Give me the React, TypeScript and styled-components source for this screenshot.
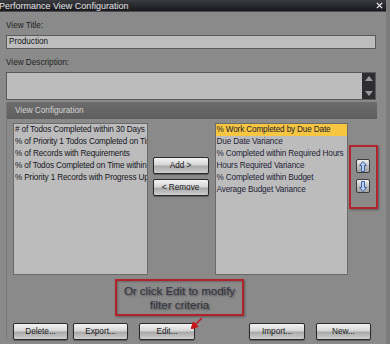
import styled, { createGlobalStyle } from 'styled-components';

const GlobalStyle = createGlobalStyle`
  html, body {
    margin: 0;
    padding: 0;
    background: #8a8a8a;
  }
  * {
    box-sizing: border-box;
  }
`;

const SANS = `"Liberation Sans", Arial, sans-serif`;

const available = [
  '# of Todos Completed within 30 Days',
  '% of Priority 1 Todos Completed on Time',
  '% of Records with Requirements',
  '% of Todos Completed on Time within Budget',
  '% Priority 1 Records with Progress Updates',
];

const selected = [
  '% Work Completed by Due Date',
  'Due Date Variance',
  '% Completed within Required Hours',
  'Hours Required Variance',
  '% Completed within Budget',
  'Average Budget Variance',
];

const App = () => {
  return (
    <Window>
      <GlobalStyle />
      <TitleBar>
        <TitleText>Performance View Configuration</TitleText>
        <CloseIcon viewBox="0 0 8 8">
          <path d="M1 1 L7 7 M7 1 L1 7" stroke="#e8e8e8" strokeWidth="1.6" />
        </CloseIcon>
      </TitleBar>
      <Form>
        <Label>View Title:</Label>
        <Input>Production</Input>
        <Label>View Description:</Label>
        <TextArea>
          <ScrollBar>
            <svg width="8" height="5" viewBox="0 0 8 5">
              <path d="M0 5 L4 0 L8 5 Z" fill="#9a9a9a" />
            </svg>
            <svg width="8" height="5" viewBox="0 0 8 5">
              <path d="M0 0 L4 5 L8 0 Z" fill="#9a9a9a" />
            </svg>
          </ScrollBar>
        </TextArea>
        <Panel>
          <PanelHeader>View Configuration</PanelHeader>
          <PanelBody>
            <ListsRow>
              <List>
                {available.map((t) => (
                  <ListItem key={t}>{t}</ListItem>
                ))}
              </List>
              <MoveColumn>
                <Button $w={56}>Add &gt;</Button>
                <Button $w={56}>&lt; Remove</Button>
              </MoveColumn>
              <List $right>
                {selected.map((t, i) => (
                  <ListItem key={t} $active={i === 0} $blue>
                    {t}
                  </ListItem>
                ))}
              </List>
              <OrderBox>
                <OrderButton>
                  <svg width="8" height="11" viewBox="0 0 8 11">
                    <path
                      d="M4 0.5 L7.5 4.5 L5.5 4.5 L5.5 10.5 L2.5 10.5 L2.5 4.5 L0.5 4.5 Z"
                      fill="#b9cdec"
                      stroke="#3d63a8"
                      strokeWidth="1"
                    />
                  </svg>
                </OrderButton>
                <OrderButton>
                  <svg width="8" height="11" viewBox="0 0 8 11">
                    <path
                      d="M4 10.5 L7.5 6.5 L5.5 6.5 L5.5 0.5 L2.5 0.5 L2.5 6.5 L0.5 6.5 Z"
                      fill="#b9cdec"
                      stroke="#3d63a8"
                      strokeWidth="1"
                    />
                  </svg>
                </OrderButton>
              </OrderBox>
            </ListsRow>
            <ButtonRow>
              <Button $w={55}>Delete...</Button>
              <Button $w={55}>Export...</Button>
              <Button $w={56} $gap={6}>
                Edit...
              </Button>
              <Spacer />
              <Button $w={56}>Import...</Button>
              <Button $w={55} $gap={6}>
                New...
              </Button>
            </ButtonRow>
          </PanelBody>
        </Panel>
      </Form>
      <Callout>
        Or click Edit to modify
        <br />
        filter criteria
      </Callout>
      <CalloutArrow viewBox="0 0 12 12">
        <path
          d="M11 1 L4.5 7.5 L6.5 9.5 L0.5 11.5 L2.5 5.5 L4.5 7.5"
          fill="#c4161c"
          stroke="#c4161c"
          strokeWidth="1.6"
          strokeLinejoin="round"
        />
      </CalloutArrow>
    </Window>
  );
};

export default App;

const Window = styled.div`
  position: relative;
  width: 390px;
  height: 344px;
  overflow: hidden;
  font-family: ${SANS};
  background: repeating-conic-gradient(#8d8d8d 0 25%, #878787 0 50%) 0 0 / 2px 2px;
  border-right: 4px solid #7c7c7c;
`;

const TitleBar = styled.div`
  display: flex;
  align-items: center;
  justify-content: space-between;
  height: 12px;
  padding: 0 3px 0 0;
  background: linear-gradient(#3a3b40, #18191d);
  border-bottom: 1px solid #4c4c50;
`;

const TitleText = styled.span`
  color: #e4e4e4;
  font-size: 9px;
  line-height: 12px;
  margin-left: -1px;
`;

const CloseIcon = styled.svg`
  width: 7px;
  height: 7px;
`;

const Form = styled.div`
  display: flex;
  flex-direction: column;
  padding: 0 10px 0 6px;
`;

const Label = styled.div`
  height: 10px;
  margin-top: 9px;
  font-size: 8.2px;
  line-height: 10px;
  color: #222;
`;

const Input = styled.div`
  height: 14px;
  margin-top: 4px;
  padding: 0 2px;
  width: 370px;
  background: #bdbdbd;
  border: 1px solid #5a5a5a;
  font-size: 8.2px;
  line-height: 12px;
  color: #151515;
`;

const TextArea = styled.div`
  display: flex;
  justify-content: flex-end;
  height: 28px;
  width: 370px;
  margin-top: 4px;
  background: #bcbcbc;
  border: 1px solid #5a5a5a;
`;

const ScrollBar = styled.div`
  display: flex;
  flex-direction: column;
  align-items: center;
  justify-content: space-between;
  width: 13px;
  padding: 3px 0;
  background: #2c2d31;
`;

const Panel = styled.div`
  margin-top: 2px;
  width: 372px;
  display: flex;
  flex-direction: column;
  border-left: 1px solid #777;
`;

const PanelHeader = styled.div`
  height: 17px;
  width: 370px;
  padding-left: 8px;
  background: linear-gradient(#6c6c6c, #5e5e5e);
  color: #d4d4d4;
  font-size: 8.2px;
  line-height: 17px;
`;

const PanelBody = styled.div`
  display: flex;
  flex-direction: column;
  padding: 4px 0 0 6px;
`;

const ListsRow = styled.div`
  display: flex;
  align-items: flex-start;
`;

const List = styled.div<{ $right?: boolean }>`
  width: ${(p) => (p.$right ? 134 : 135)}px;
  height: 152px;
  margin-left: ${(p) => (p.$right ? 6 : 0)}px;
  background: #bcbcbc;
  border: 1px solid #6a6a6a;
  overflow: hidden;
`;

const ListItem = styled.div<{ $active?: boolean; $blue?: boolean }>`
  height: 12px;
  padding-left: 1px;
  white-space: nowrap;
  overflow: hidden;
  font-size: 8.2px;
  letter-spacing: -0.15px;
  line-height: 12px;
  color: ${(p) => (p.$blue ? '#1d2236' : '#15151c')};
  background: ${(p) => (p.$active ? '#f6c640' : 'transparent')};
`;

const MoveColumn = styled.div`
  display: flex;
  flex-direction: column;
  gap: 5px;
  margin: 34px 0 0 5px;
`;

const Button = styled.div<{ $w: number; $gap?: number }>`
  width: ${(p) => p.$w}px;
  height: 17px;
  margin-left: ${(p) => p.$gap ?? 0}px;
  border: 1px solid #2a2a2a;
  border-radius: 2px;
  background: linear-gradient(#f4f4f4 0%, #d6d6d6 45%, #a9a9a9 55%, #cfcfcf 100%);
  box-shadow: 0 1px 1px rgba(0, 0, 0, 0.35);
  color: #1a1a1a;
  font-size: 8.2px;
  line-height: 16px;
  text-align: center;
`;

const OrderBox = styled.div`
  display: flex;
  flex-direction: column;
  gap: 6px;
  width: 29px;
  height: 64px;
  margin: 22px 0 0 1px;
  padding: 12px 0 0 5px;
  border: 2px solid #b3232b;
  box-shadow: 1px 1px 2px rgba(0, 0, 0, 0.35);
`;

const OrderButton = styled.div`
  display: flex;
  align-items: center;
  justify-content: center;
  width: 14px;
  height: 14px;
  border: 1px solid #3a3a3a;
  border-radius: 2px;
  background: linear-gradient(#f2f2f2, #bdbdbd 55%, #a2a2a2);
`;

const ButtonRow = styled.div`
  display: flex;
  gap: 5px;
  margin-top: 48px;
  padding-right: 7px;
`;

const Spacer = styled.div`
  flex: 1;
`;

const Callout = styled.div`
  position: absolute;
  left: 115px;
  top: 279px;
  width: 129px;
  height: 37px;
  border: 2px solid #b2222a;
  box-shadow: 1px 1px 2px rgba(0, 0, 0, 0.35), inset 1px 1px 2px rgba(0, 0, 0, 0.25);
  font-size: 11.5px;
  line-height: 14px;
  padding-top: 3px;
  text-align: center;
  color: #33333f;
  text-shadow: 1px 1px 2px rgba(0, 0, 0, 0.45);
`;

const CalloutArrow = styled.svg`
  position: absolute;
  left: 191px;
  top: 317px;
  width: 12px;
  height: 12px;
`;
